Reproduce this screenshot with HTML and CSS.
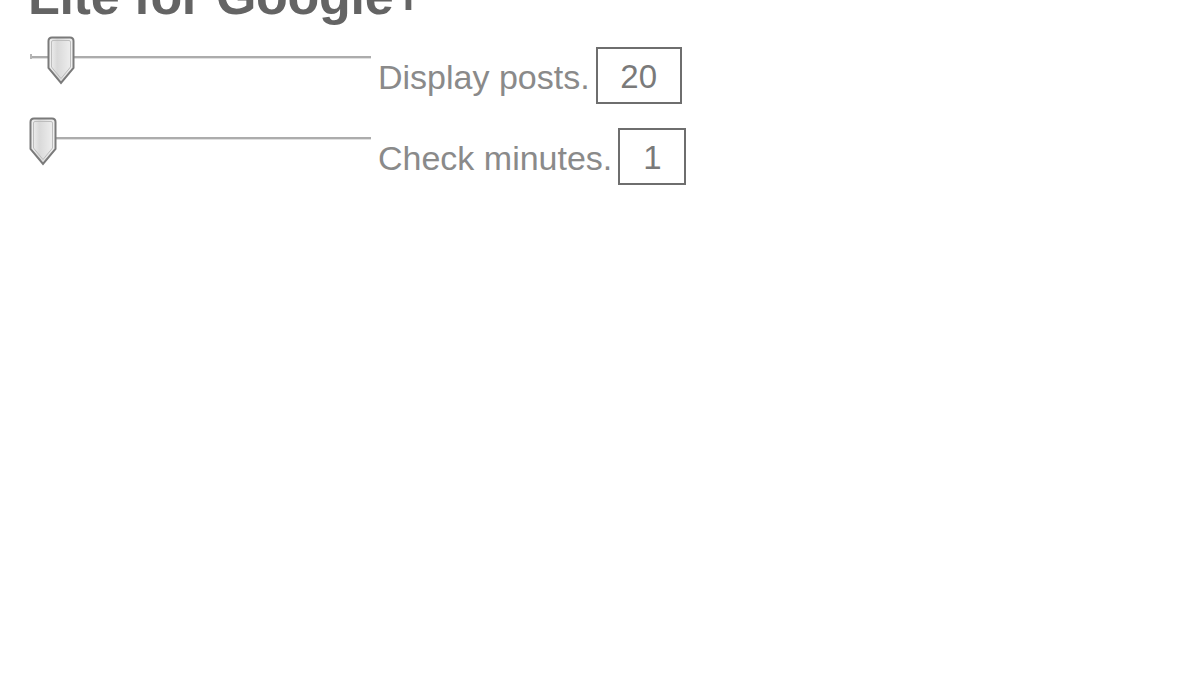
FILE: index.html
```html
<!DOCTYPE html>
<html>
<head>
<meta charset="utf-8">
<link rel="stylesheet" href="styles.css">
</head>
<body>
<div class="page">
  <h1 class="title">Lite for Google+</h1>
  <div class="row row-first">
    <div class="slider">
      <div class="track"></div>
      <svg class="thumb thumb-posts" width="28" height="49" viewBox="0 0 28 49">
        <defs>
          <linearGradient id="g1" x1="0" y1="0" x2="1" y2="0">
            <stop offset="0" stop-color="#f4f4f4"/>
            <stop offset="0.35" stop-color="#d9d9d9"/>
            <stop offset="1" stop-color="#f2f2f2"/>
          </linearGradient>
        </defs>
        <path d="M5,1.5 H23 Q26.5,1.5 26.5,5 V32 L14,47 L1.5,32 V5 Q1.5,1.5 5,1.5 Z" fill="url(#g1)" stroke="#7a7a7a" stroke-width="2"/>
        <path d="M6,4.5 H22 Q23.5,4.5 23.5,6 V31 L14,42.5 L4.5,31 V6 Q4.5,4.5 6,4.5 Z" fill="none" stroke="#bdbdbd" stroke-width="1"/>
      </svg>
    </div>
    <span class="label">Display posts.</span>
    <span class="box box-posts">20</span>
  </div>
  <div class="row">
    <div class="slider">
      <div class="track track-min"></div>
      <svg class="thumb thumb-minutes" width="28" height="49" viewBox="0 0 28 49">
        <defs>
          <linearGradient id="g2" x1="0" y1="0" x2="1" y2="0">
            <stop offset="0" stop-color="#f4f4f4"/>
            <stop offset="0.35" stop-color="#d9d9d9"/>
            <stop offset="1" stop-color="#f2f2f2"/>
          </linearGradient>
        </defs>
        <path d="M5,1.5 H23 Q26.5,1.5 26.5,5 V32 L14,47 L1.5,32 V5 Q1.5,1.5 5,1.5 Z" fill="url(#g2)" stroke="#7a7a7a" stroke-width="2"/>
        <path d="M6,4.5 H22 Q23.5,4.5 23.5,6 V31 L14,42.5 L4.5,31 V6 Q4.5,4.5 6,4.5 Z" fill="none" stroke="#bdbdbd" stroke-width="1"/>
      </svg>
    </div>
    <span class="label">Check minutes.</span>
    <span class="box box-minutes">1</span>
  </div>
</div>
</body>
</html>
```

FILE: styles.css
```css
html, body {
  margin: 0;
  padding: 0;
  background: #ffffff;
}

.page {
  padding-left: 28px;
  font-family: "Liberation Sans", Arial, sans-serif;
}

.title {
  margin: -30px 0 0 0;
  font-size: 52px;
  line-height: 1;
  font-weight: bold;
  color: #646464;
  letter-spacing: -0.3px;
}

.row {
  display: flex;
  align-items: flex-start;
  margin-top: 13px;
  height: 68px;
}

.row-first {
  margin-top: 14px;
}

.slider {
  position: relative;
  width: 341px;
  height: 49px;
  margin-left: 2px;
}

.track {
  position: absolute;
  left: 0;
  right: 0;
  top: 20px;
  height: 0;
  border-top: 2px solid #acacac;
  box-shadow: 0 1px 0 #e0e0e0;
}

.track::before {
  content: "";
  position: absolute;
  left: 0;
  top: -4px;
  width: 2px;
  height: 5px;
  background: #b5b5b5;
}

.track-min::before {
  display: none;
}

.thumb {
  position: absolute;
  top: 0;
}

.thumb-posts {
  left: 17px;
}

.thumb-minutes {
  left: -1px;
}

.label {
  margin-top: 24px;
  margin-left: 7px;
  font-size: 34px;
  line-height: 1;
  color: #8a8a8a;
  white-space: nowrap;
}

.box {
  margin-top: 11px;
  margin-left: 6px;
  box-sizing: border-box;
  height: 57px;
  border: 2px solid #6e6e6e;
  display: flex;
  align-items: center;
  justify-content: center;
  padding-top: 3px;
  font-size: 33px;
  color: #7a7a7a;
}

.box-posts {
  width: 86px;
}

.box-minutes {
  width: 68px;
}
```
